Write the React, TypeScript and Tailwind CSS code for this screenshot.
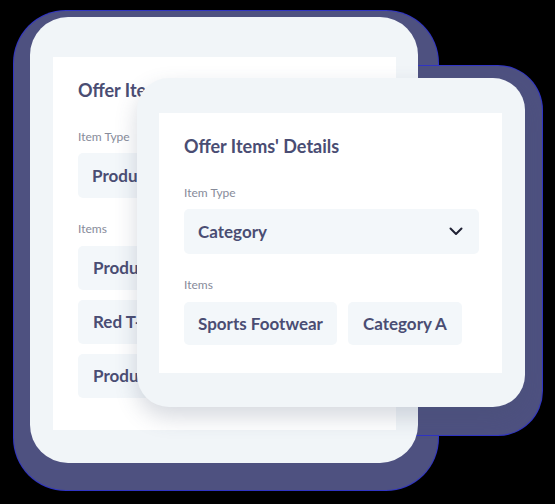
import React from "react";

const font = { fontFamily: "Lato, 'Noto Sans', sans-serif" };

function Chevron() {
  return (
    <svg width="14" height="9" viewBox="0 0 14 9" fill="none">
      <path d="M1.5 1.5 L7 7 L12.5 1.5" stroke="#1f2133" strokeWidth="2" strokeLinecap="round" strokeLinejoin="round" />
    </svg>
  );
}

function Panel({ children }: { children: React.ReactNode }) {
  return <div className="flex-1 bg-white pt-[22px] pl-[25px] pr-[23px] flex flex-col">{children}</div>;
}

const box = "bg-[#f3f7fa] rounded-[5px] flex items-center text-[17px] font-bold text-[#4a4d73] whitespace-nowrap";
const label = "text-[12px] leading-[16px] text-[#878b9a]";

export default function App() {
  return (
    <div className="relative w-[555px] h-[504px] bg-black overflow-hidden" style={font}>
      {/* halos */}
      <div className="absolute left-[14px] top-[11px] w-[424px] h-[479px] rounded-[52px] bg-[#4e5180] ring-1 ring-[#3034c4]" />
      <div className="absolute left-[125px] top-[66px] w-[417px] h-[369px] rounded-[44px] bg-[#4e5180] ring-1 ring-[#3034c4]" />

      {/* back card */}
      <div className="absolute left-[30px] top-[17px] w-[388px] h-[446px] rounded-[38px] bg-[#f1f5f8] pt-[40px] pl-[23px] pr-[22px] pb-[33px] flex flex-col overflow-hidden">
        <Panel>
          <div className="text-[18px] leading-[22px] font-bold text-[#4a4d73] whitespace-nowrap">Offer Items' Details</div>
          <div className={`mt-[28px] ${label}`}>Item Type</div>
          <div className={`mt-[8px] h-[45px] pl-[14px] ${box}`}>Product Catalogue</div>
          <div className={`mt-[23px] ${label}`}>Items</div>
          <div className="mt-[9px] flex flex-col gap-[10px] items-start">
            <div className={`h-[44px] px-[15px] ${box}`}>Product Blue Jeans</div>
            <div className={`h-[44px] px-[15px] ${box}`}>Red T-Shirt XL</div>
            <div className={`h-[44px] px-[15px] ${box}`}>Product Sneakers</div>
          </div>
        </Panel>
      </div>

      {/* front card */}
      <div className="absolute left-[137px] top-[78px] w-[388px] h-[329px] rounded-[32px] bg-[#f1f5f8] pt-[35px] pl-[22px] pr-[23px] pb-[34px] flex flex-col shadow-[0_10px_22px_rgba(70,80,110,0.22)]">
        <Panel>
          <div className="text-[18px] leading-[22px] font-bold text-[#4a4d73] whitespace-nowrap">Offer Items' Details</div>
          <div className={`mt-[28px] ${label}`}>Item Type</div>
          <div className={`mt-[8px] h-[45px] justify-between pl-[14px] pr-[16px] ${box}`}>
            <span>Category</span>
            <Chevron />
          </div>
          <div className={`mt-[23px] ${label}`}>Items</div>
          <div className="mt-[9px] flex gap-[11px]">
            <div className={`h-[43px] px-[14px] ${box}`}>Sports Footwear</div>
            <div className={`h-[43px] px-[15px] ${box}`}>Category A</div>
          </div>
        </Panel>
      </div>
    </div>
  );
}
